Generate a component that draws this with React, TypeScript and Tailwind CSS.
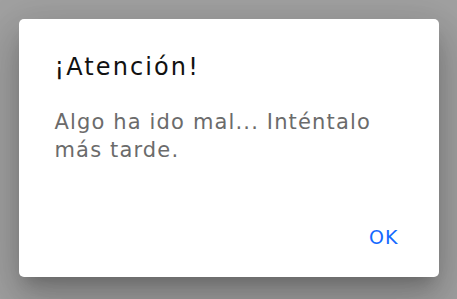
import React from 'react';

const AlertDialog: React.FC<{ title: string; message: string; onOk?: () => void }> = ({ title, message, onOk }) => {
  return (
    <div className="w-[420px] h-[258px] bg-white rounded-[5px] shadow-[0_11px_15px_-7px_rgba(0,0,0,0.2),0_24px_38px_3px_rgba(0,0,0,0.14),0_9px_46px_8px_rgba(0,0,0,0.12)] flex flex-col">
      <h2 className="pl-9 pt-[32px] text-[24px] leading-[32px] tracking-[2.1px] text-[#111] font-normal">{title}</h2>
      <p className="pl-9 pr-10 pt-[25px] text-[21px] leading-[28px] tracking-[1.15px] text-[#6b6b6b]">{message}</p>
      <div className="mt-auto flex justify-end pr-[38px] pb-[22px]">
        <button onClick={onOk} className="px-0.5 py-[6px] text-[19px] leading-[24px] tracking-[1px] text-[#1469ff]">
          OK
        </button>
      </div>
    </div>
  );
};

export default function App() {
  return (
    <div className="w-[457px] h-[299px] bg-[#a1a1a1] flex items-start justify-center pt-[19px] font-['DejaVu_Sans',sans-serif]">
      <AlertDialog title="¡Atención!" message="Algo ha ido mal... Inténtalo más tarde." />
    </div>
  );
}
